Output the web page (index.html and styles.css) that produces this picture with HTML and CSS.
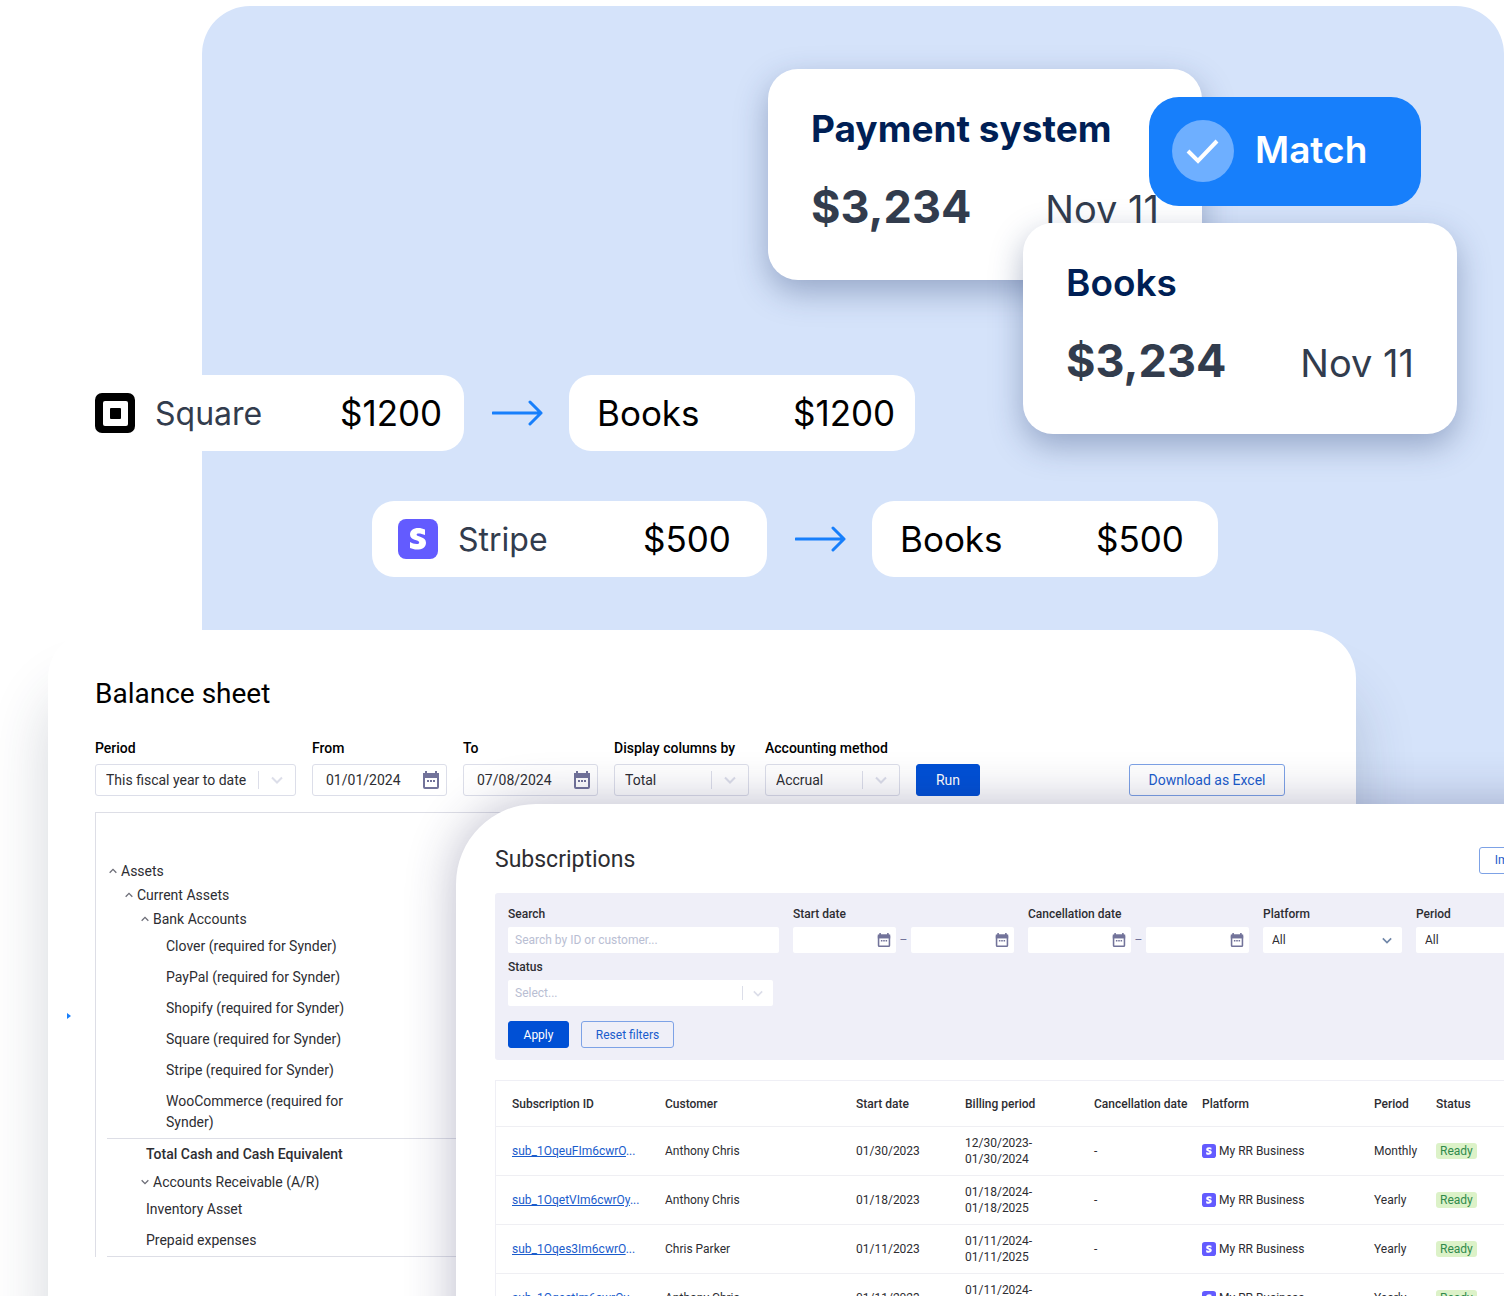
FILE: index.html
```html
<!DOCTYPE html>
<html lang="en">

<head>
    <meta charset="utf-8">
    <title>Balance sheet and subscriptions</title>
    <meta name="viewport" content="width=device-width, initial-scale=1">
    <link rel="stylesheet" href="styles.css">
</head>

<body>
    <svg class="sprite" width="0" height="0" aria-hidden="true">
        <symbol id="calendar" viewBox="0 0 18 20">
            <path d="M4 1v3M14 1v3" stroke="currentColor" stroke-width="2" />
            <rect x="2" y="4" width="14" height="14" rx="1" fill="none" stroke="currentColor" stroke-width="2" />
            <path d="M1 3h16v5H1z" fill="currentColor" />
            <path d="M5 11h2M8 11h2M11 11h2" stroke="currentColor" stroke-width="2" />
        </symbol>
        <symbol id="chevron" viewBox="0 0 12 8">
            <path d="M1 1.500l5 5 5-5" fill="none" stroke="currentColor" stroke-width="2" />
        </symbol>
        <symbol id="arrow" viewBox="0 0 52 26">
            <path d="M1 13h48M38 2l11 11-11 11" fill="none" stroke="#177ffb" stroke-width="3" stroke-linecap="round" stroke-linejoin="round" />
        </symbol>
        <symbol id="stripe" viewBox="0 0 40 40">
            <rect width="40" height="40" rx="8" fill="#635bff" />
            <path d="M27 10.500c-2-.9-4.300-1.500-6.700-1.500-5 0-8.300 2.500-8.300 6.600 0 6.200 9.200 5.100 9.200 7.800 0 1.100-1.100 1.500-2.600 1.500-2.200 0-4.800-.9-6.600-2v6.200c2 .9 4.500 1.500 6.800 1.500 5.300 0 9.200-2.400 9.200-6.900 0-6.600-9.400-5.500-9.400-7.900 0-.9.800-1.300 2-1.300 1.900 0 4.400.6 6.400 1.600z" fill="#fff" />
        </symbol>
    </svg>

    <main class="scene">
        <div class="backdrop"></div>

        <section class="match-card match-card-payment">
            <h2>Payment system</h2>
            <div class="match-row">
                <strong>$3,234</strong>
                <span>Nov 11</span>
            </div>
        </section>
        <section class="match-card match-card-books">
            <h2>Books</h2>
            <div class="match-row">
                <strong>$3,234</strong>
                <span>Nov 11</span>
            </div>
        </section>
        <div class="match-badge">
            <svg width="62" height="62" viewBox="0 0 62 62">
                <circle cx="31" cy="31" r="31" fill="#6eafff" />
                <path d="M16 31l10 10 19-20" fill="none" stroke="#fff" stroke-width="4" />
            </svg>
            <span>Match</span>
        </div>

        <div class="transfers">
            <div class="transfer">
                <div class="pill pill-source">
                    <svg width="40" height="40" viewBox="0 0 40 40">
                        <rect width="40" height="40" rx="7" fill="#000" />
                        <rect x="8" y="8" width="25" height="25" rx="2" fill="#fff" />
                        <rect x="15" y="15" width="11" height="11" rx="1" fill="#000" />
                    </svg>
                    <span class="pill-name">Square</span>
                    <span class="pill-amount">$1200</span>
                </div>
                <svg class="transfer-arrow"><use href="#arrow" /></svg>
                <div class="pill pill-books">
                    <span>Books</span>
                    <span class="pill-amount">$1200</span>
                </div>
            </div>
            <div class="transfer transfer-second">
                <div class="pill pill-source">
                    <svg width="40" height="40"><use href="#stripe" /></svg>
                    <span class="pill-name">Stripe</span>
                    <span class="pill-amount">$500</span>
                </div>
                <svg class="transfer-arrow"><use href="#arrow" /></svg>
                <div class="pill pill-books">
                    <span>Books</span>
                    <span class="pill-amount">$500</span>
                </div>
            </div>
        </div>

        <section class="balance">
            <button class="expand" aria-label="Expand menu"></button>
            <h1>Balance sheet</h1>
            <form class="balance-filters">
                <div class="field field-wide">
                    <label for="period">Period</label>
                    <div class="control split">
                        <select id="period"><option>This fiscal year to date</option></select>
                        <svg class="chevron"><use href="#chevron" /></svg>
                    </div>
                </div>
                <div class="field">
                    <label for="from">From</label>
                    <div class="control">
                        <input id="from" type="text" value="01/01/2024">
                        <svg class="calendar"><use href="#calendar" /></svg>
                    </div>
                </div>
                <div class="field">
                    <label for="to">To</label>
                    <div class="control">
                        <input id="to" type="text" value="07/08/2024">
                        <svg class="calendar"><use href="#calendar" /></svg>
                    </div>
                </div>
                <div class="field">
                    <label for="columns">Display columns by</label>
                    <div class="control split">
                        <select id="columns"><option>Total</option></select>
                        <svg class="chevron"><use href="#chevron" /></svg>
                    </div>
                </div>
                <div class="field">
                    <label for="method">Accounting method</label>
                    <div class="control split">
                        <select id="method"><option>Accrual</option></select>
                        <svg class="chevron"><use href="#chevron" /></svg>
                    </div>
                </div>
                <button type="button" class="btn btn-primary">Run</button>
                <button type="button" class="btn btn-download">Download as Excel</button>
            </form>
            <div class="report">
                <div class="group level-1"><svg class="caret caret-up"><use href="#chevron" /></svg>Assets</div>
                <div class="group level-2"><svg class="caret caret-up"><use href="#chevron" /></svg>Current Assets</div>
                <div class="group level-3"><svg class="caret caret-up"><use href="#chevron" /></svg>Bank Accounts</div>
                <div class="account level-4">Clover (required for Synder)</div>
                <div class="account level-4">PayPal (required for Synder)</div>
                <div class="account level-4">Shopify (required for Synder)</div>
                <div class="account level-4">Square (required for Synder)</div>
                <div class="account level-4">Stripe (required for Synder)</div>
                <div class="account level-4"><p>WooCommerce (required for Synder)</p></div>
                <div class="account total">Total Cash and Cash Equivalent</div>
                <div class="group level-3"><svg class="caret"><use href="#chevron" /></svg>Accounts Receivable (A/R)</div>
                <div class="account">Inventory Asset</div>
                <div class="account">Prepaid expenses</div>
                <div class="report-end"></div>
            </div>
        </section>

        <section class="subscriptions">
            <header class="subs-header">
                <h1>Subscriptions</h1>
                <button class="btn">Import</button>
            </header>
            <form class="subs-filters">
                <div class="subs-row">
                    <div class="field field-search">
                        <label for="search">Search</label>
                        <div class="control"><input id="search" type="text" placeholder="Search by ID or customer..."></div>
                    </div>
                    <div class="field">
                        <label for="start-from">Start date</label>
                        <div class="range">
                            <div class="control">
                                <input id="start-from" type="text">
                                <svg class="calendar"><use href="#calendar" /></svg>
                            </div>
                            <span>–</span>
                            <div class="control">
                                <input id="start-to" type="text" aria-label="Start date to">
                                <svg class="calendar"><use href="#calendar" /></svg>
                            </div>
                        </div>
                    </div>
                    <div class="field">
                        <label for="cancel-from">Cancellation date</label>
                        <div class="range">
                            <div class="control">
                                <input id="cancel-from" type="text">
                                <svg class="calendar"><use href="#calendar" /></svg>
                            </div>
                            <span>–</span>
                            <div class="control">
                                <input id="cancel-to" type="text" aria-label="Cancellation date to">
                                <svg class="calendar"><use href="#calendar" /></svg>
                            </div>
                        </div>
                    </div>
                    <div class="field field-select">
                        <label for="platform">Platform</label>
                        <div class="control">
                            <select id="platform"><option>All</option></select>
                            <svg class="chevron chevron-dark"><use href="#chevron" /></svg>
                        </div>
                    </div>
                    <div class="field field-select">
                        <label for="sub-period">Period</label>
                        <div class="control">
                            <select id="sub-period"><option>All</option></select>
                            <svg class="chevron chevron-dark"><use href="#chevron" /></svg>
                        </div>
                    </div>
                </div>
                <div class="field field-status">
                    <label for="status">Status</label>
                    <div class="control split">
                        <select id="status" class="empty"><option>Select...</option></select>
                        <svg class="chevron"><use href="#chevron" /></svg>
                    </div>
                </div>
                <div class="subs-actions">
                    <button type="button" class="btn btn-primary">Apply</button>
                    <button type="button" class="btn">Reset filters</button>
                </div>
            </form>

            <table class="subs-table">
                <colgroup>
                    <col class="col-id">
                    <col class="col-customer">
                    <col class="col-start">
                    <col class="col-billing">
                    <col class="col-cancel">
                    <col class="col-platform">
                    <col class="col-period">
                    <col>
                </colgroup>
                <thead>
                    <tr>
                        <th>Subscription ID</th>
                        <th>Customer</th>
                        <th>Start date</th>
                        <th>Billing period</th>
                        <th>Cancellation date</th>
                        <th>Platform</th>
                        <th>Period</th>
                        <th>Status</th>
                    </tr>
                </thead>
                <tbody>
                    <tr>
                        <td><a href="#">sub_1OqeuFIm6cwrO</a><i>...</i></td>
                        <td>Anthony Chris</td>
                        <td>01/30/2023</td>
                        <td>12/30/2023-<br>01/30/2024</td>
                        <td>-</td>
                        <td><div class="platform"><svg><use href="#stripe" /></svg>My RR Business</div></td>
                        <td>Monthly</td>
                        <td><span class="ready">Ready</span></td>
                    </tr>
                    <tr>
                        <td><a href="#">sub_1OqetVIm6cwrOy</a><i>...</i></td>
                        <td>Anthony Chris</td>
                        <td>01/18/2023</td>
                        <td>01/18/2024-<br>01/18/2025</td>
                        <td>-</td>
                        <td><div class="platform"><svg><use href="#stripe" /></svg>My RR Business</div></td>
                        <td>Yearly</td>
                        <td><span class="ready">Ready</span></td>
                    </tr>
                    <tr>
                        <td><a href="#">sub_1Oqes3Im6cwrO</a><i>...</i></td>
                        <td>Chris Parker</td>
                        <td>01/11/2023</td>
                        <td>01/11/2024-<br>01/11/2025</td>
                        <td>-</td>
                        <td><div class="platform"><svg><use href="#stripe" /></svg>My RR Business</div></td>
                        <td>Yearly</td>
                        <td><span class="ready">Ready</span></td>
                    </tr>
                    <tr>
                        <td><a href="#">sub_1OqestIm6cwrOy</a><i>...</i></td>
                        <td>Anthony Chris</td>
                        <td>01/11/2023</td>
                        <td>01/11/2024-<br>01/11/2025</td>
                        <td>-</td>
                        <td><div class="platform"><svg><use href="#stripe" /></svg>My RR Business</div></td>
                        <td>Yearly</td>
                        <td><span class="ready">Ready</span></td>
                    </tr>
                </tbody>
            </table>
        </section>
    </main>
</body>

</html>
```

FILE: styles.css
```css
* {
    box-sizing: border-box;
}

body {
    margin: 0;
    background-color: #fff;
    font-family: Roboto, "Liberation Sans", sans-serif;
    color: #2d2d32;
}

h1, h2, p {
    margin: 0;
}

button, input, select {
    font: inherit;
    color: inherit;
}

.sprite {
    position: absolute;
}

/* canvas with the overlapping windows */
.scene {
    position: relative;
    display: flex;
    flex-direction: column;
    height: 100vh;
    overflow: hidden;
    padding-top: 375px;
}

.backdrop {
    position: absolute;
    top: 6px;
    right: 0;
    bottom: 0;
    left: 202px;
    border-radius: 48px 48px 0 0;
    background-color: #d5e3fa;
}

/* matched transaction cards */
.match-card {
    position: absolute;
    width: 434px;
    padding: 36px 43px 41px;
    border-radius: 30px;
    background-color: #fff;
    box-shadow: 0 12px 32px rgba(40, 60, 110, 0.36);
    font-family: Inter, sans-serif;
    color: #323c4d;
}

.match-card-payment {
    top: 69px;
    right: 302px;
}

.match-card-books {
    top: 223px;
    right: 47px;
}

.match-card h2 {
    font-size: 37px;
    font-weight: 600;
    line-height: 48px;
    color: #001f55;
}

.match-card-payment h2 {
    font-weight: 700;
}

.match-row {
    display: flex;
    justify-content: space-between;
    align-items: baseline;
    margin-top: 24px;
    line-height: 60px;
}

.match-row strong {
    font-size: 45px;
    font-weight: 700;
}

.match-row span {
    font-size: 38px;
}

.match-badge {
    position: absolute;
    top: 97px;
    right: 83px;
    display: flex;
    gap: 21px;
    width: 272px;
    height: 109px;
    padding: 23px;
    border-radius: 30px;
    background-color: #177ffb;
    font-family: Inter, sans-serif;
    font-size: 37px;
    font-weight: 600;
    line-height: 60px;
    color: #fff;
}

/* payment rows */
.transfers {
    position: relative;
    display: flex;
    flex-direction: column;
    gap: 50px;
    padding-left: 69px;
    font-family: Inter, sans-serif;
    font-size: 35px;
    color: #000;
}

.transfer {
    display: flex;
    align-items: center;
}

.transfer-second {
    padding-left: 303px;
}

.transfer-arrow {
    width: 52px;
    height: 26px;
    margin: 0 25px 0 28px;
}

.pill {
    display: flex;
    align-items: center;
    height: 76px;
    border-radius: 22px;
    background-color: #fff;
}

.pill-source {
    width: 395px;
    padding: 0 26px;
}

.pill-name {
    flex: 1;
    padding-left: 20px;
    font-size: 32px;
    color: #323c4d;
}

.pill-amount {
    width: 98px;
}

.pill-books {
    justify-content: space-between;
    width: 346px;
    padding: 0 24px 0 28px;
}

/* shared controls */
.field label {
    display: block;
    font-weight: 500;
    white-space: nowrap;
}

.control {
    position: relative;
    display: flex;
    align-items: center;
    background-color: #fff;
}

.control input,
.control select {
    width: 100%;
    height: 100%;
    margin: 0;
    border: 0;
    outline: 0;
    background: none;
    appearance: none;
}

.calendar,
.chevron {
    position: absolute;
    pointer-events: none;
}

.calendar {
    color: #72739a;
}

.chevron {
    color: #dcdee9;
}

.chevron-dark {
    color: #7087a8;
}

.split::after {
    content: "";
    position: absolute;
    width: 1px;
    background-color: #dcdee9;
}

.btn {
    border: 1px solid #7da2e6;
    border-radius: 3px;
    padding: 0;
    background-color: transparent;
    color: #1a5ccc;
}

.btn-primary {
    border-color: #0050d5;
    background-color: #0050d5;
    color: #fff;
}

/* balance sheet window */
.balance {
    position: relative;
    flex: 1;
    margin: 53px 148px 0 48px;
    padding: 46px 71px 0 47px;
    border-radius: 48px 48px 0 0;
    background-color: #fff;
    box-shadow: 0 60px 60px rgba(40, 55, 80, 0.2);
    font-size: 14px;
}

.balance h1 {
    font-size: 28px;
    font-weight: 400;
    line-height: 36px;
    color: #000;
}

.expand {
    position: absolute;
    top: 383px;
    left: 19px;
    width: 4px;
    height: 6px;
    padding: 0;
    border: 0;
    background-color: #177ffb;
    clip-path: polygon(0 0, 100% 50%, 0 100%);
}

.balance-filters {
    display: flex;
    align-items: flex-end;
    gap: 16px;
    margin-top: 26px;
}

.balance-filters .field {
    width: 135px;
}

.balance-filters .field-wide {
    width: 201px;
}

.balance-filters label {
    line-height: 20px;
    margin-bottom: 6px;
    color: #000;
}

.balance-filters .control {
    height: 32px;
    border: 1px solid #dcdee9;
    border-radius: 3px;
}

.balance-filters input {
    padding: 0 13px;
}

.balance-filters select {
    padding: 0 10px;
}

.balance-filters .calendar {
    right: 6px;
    width: 18px;
    height: 20px;
}

.balance-filters .chevron {
    right: 12px;
    width: 12px;
    height: 8px;
}

.balance-filters .split::after {
    right: 36px;
    height: 18px;
}

.balance-filters .btn {
    height: 32px;
}

.balance-filters .btn-primary {
    width: 64px;
}

.balance-filters .btn-download {
    width: 156px;
    margin-left: auto;
}

.report {
    margin-top: 16px;
    padding: 46px 0 0 11px;
    border: 1px solid #dddee6;
    border-width: 1px 0 0 1px;
}

.group {
    display: flex;
    align-items: center;
    gap: 4px;
    line-height: 24px;
}

.caret {
    width: 8px;
    height: 6px;
    color: #6d6e78;
}

.caret-up {
    transform: rotate(180deg);
}

.account {
    padding: 5px 0 5px 39px;
    line-height: 21px;
}

.account p {
    width: 200px;
}

.level-1 {
    padding-left: 2px;
}

.level-2 {
    padding-left: 18px;
}

.level-3 {
    padding-left: 34px;
}

.level-4 {
    padding-left: 59px;
}

.total {
    border-top: 1px solid #dddee6;
    font-weight: 500;
}

.report-end {
    border-top: 1px solid #dddee6;
}

/* subscriptions window, runs past the right edge */
.subscriptions {
    position: absolute;
    top: 804px;
    right: -96px;
    left: 456px;
    padding: 41px 0 40px 39px;
    border-radius: 80px 0 0 0;
    background-color: #fff;
    box-shadow: 0 0 50px rgba(40, 40, 90, 0.32);
    font-size: 12px;
}

.subs-header {
    display: flex;
    justify-content: space-between;
    align-items: center;
    padding-right: 54px;
}

.subs-header h1 {
    font-size: 23px;
    font-weight: 400;
    line-height: 30px;
}

.subscriptions .btn {
    height: 27px;
}

.subs-header .btn {
    width: 67px;
}

.subs-filters {
    margin-top: 18px;
    padding: 13px 13px 12px;
    border-radius: 3px 0 0 3px;
    background-color: #efeff8;
}

.subs-row {
    display: flex;
    gap: 14px;
}

.subs-filters label {
    line-height: 16px;
    margin-bottom: 5px;
}

.subs-filters .control {
    height: 26px;
    border-radius: 2px;
}

.range {
    display: flex;
    align-items: center;
}

.range .control {
    width: 103px;
}

.range span {
    width: 15px;
    text-align: center;
    color: #72739a;
}

.subs-filters .field-search {
    width: 271px;
}

.subs-filters .field-select {
    width: 139px;
}

.subs-filters .field-status {
    width: 265px;
    margin-top: 6px;
}

.subs-filters input {
    padding: 0 7px;
}

.subs-filters select {
    padding: 0 9px;
}

.subs-filters .empty {
    padding: 0 7px;
    color: #b9bed3;
}

.subs-filters input::placeholder {
    color: #b9bed3;
    opacity: 1;
}

.subs-filters .calendar {
    right: 5px;
    width: 14px;
    height: 16px;
}

.subs-filters .chevron {
    right: 10px;
    width: 10px;
    height: 7px;
}

.subs-filters .split::after {
    right: 30px;
    height: 14px;
}

.subs-actions {
    display: flex;
    gap: 12px;
    margin-top: 15px;
}

.subs-actions .btn {
    width: 93px;
}

.subs-actions .btn-primary {
    width: 61px;
}

.subs-table {
    width: 100%;
    margin-top: 20px;
    border-collapse: separate;
    border-spacing: 0;
    table-layout: fixed;
    border: 1px solid #efeff5;
    border-bottom: 0;
}

.subs-table th,
.subs-table td {
    padding: 0 0 0 16px;
    border-bottom: 1px solid #efeff3;
    text-align: left;
    white-space: nowrap;
    line-height: 16px;
}

.subs-table th {
    height: 46px;
    font-weight: 500;
}

.subs-table td {
    height: 49px;
}

.subs-table a {
    color: #1a5ccc;
    text-decoration: underline;
}

.subs-table i {
    font-style: normal;
    color: #1a5ccc;
}

.col-id {
    width: 153px;
}

.col-customer {
    width: 191px;
}

.col-start {
    width: 109px;
}

.col-billing {
    width: 129px;
}

.col-cancel {
    width: 108px;
}

.col-platform {
    width: 172px;
}

.col-period {
    width: 62px;
}

.platform {
    display: flex;
    align-items: center;
    gap: 3px;
}

.platform svg {
    width: 14px;
    height: 14px;
}

.ready {
    display: inline-block;
    padding: 0 4px;
    border-radius: 3px;
    background-color: #dcf2c8;
    color: #2f8a4c;
}
```
